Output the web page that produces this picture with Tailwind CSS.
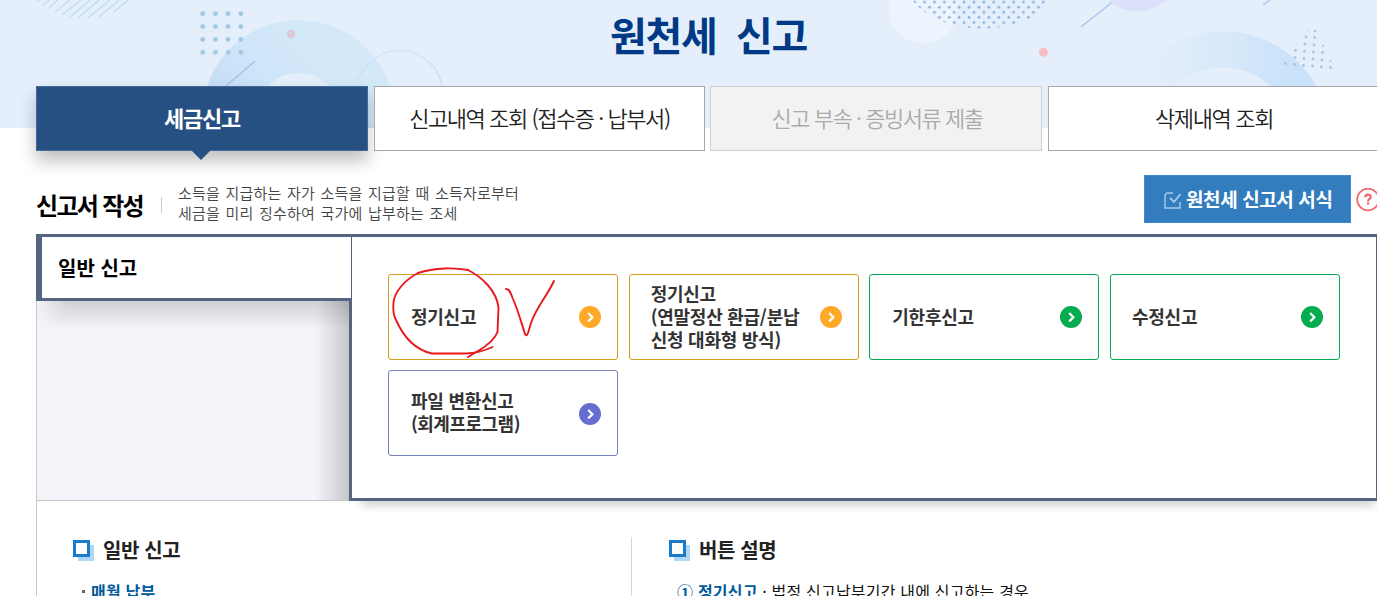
<!DOCTYPE html>
<html lang="ko">
<head>
  <meta charset="UTF-8" />
  <meta name="viewport" content="width=device-width, initial-scale=1.0"/>
  <title>원천세 신고</title>
  <script src="https://cdn.jsdelivr.net/npm/@tailwindcss/browser@4"></script>
</head>
<body class="relative h-[596px] w-[1377px] overflow-hidden bg-white font-['Noto_Sans_CJK_KR',sans-serif] text-[#333] whitespace-nowrap">

  <!-- Banner background -->
  <svg class="absolute left-0 top-0 -z-10" width="1377" height="128" viewBox="0 0 1377 128" fill="none">
    <defs>
      <linearGradient id="ringLeft" x1="0" y1="0.700" x2="0.800" y2="0">
        <stop offset="0.1" stop-color="#c3dbf6"/>
        <stop offset="0.5" stop-color="#cfe5f9"/>
        <stop offset="0.85" stop-color="#d3e9f8"/>
      </linearGradient>
      <linearGradient id="ringRight" x1="0" y1="0" x2="1" y2="0">
        <stop offset="0" stop-color="#e5effc"/>
        <stop offset="0.5" stop-color="#d9e9f9"/>
        <stop offset="0.9" stop-color="#c9e1fa"/>
      </linearGradient>
      <pattern id="dotGrid" x="200" y="8" width="12.7" height="12.9" patternUnits="userSpaceOnUse">
        <circle cx="2.700" cy="5.600" r="2.400" fill="#9fc7e4"/>
      </pattern>
      <pattern id="dotMesh" x="914.6" y="-0.5" width="9.9" height="10.2" patternUnits="userSpaceOnUse">
        <circle cx="5" cy="7.6" r="1.4" fill="#85b0de"/>
        <circle cx="0" cy="2.5" r="1.4" fill="#85b0de"/>
        <circle cx="9.9" cy="2.5" r="1.4" fill="#85b0de"/>
      </pattern>
    </defs>
    <rect width="1377" height="128" fill="#e5effc"/>
    <g stroke="#c0dbf4" stroke-width="1.3">
      <path d="M37 1l2-1M43 5l6-5M49 8l9-8M55 12l15-12M62 15l19-15M70 17l20-17M78 18l21-18M88 18l22-18M99 17l20-17M114 12l14-12"/>
    </g>
    <circle cx="298.500" cy="116.300" r="69.700" stroke="url(#ringLeft)" stroke-width="53"/>
    <rect x="200" y="9" width="44" height="48" fill="url(#dotGrid)"/>
    <circle cx="291" cy="34" r="4.3" fill="#dccbd7"/>
    <path d="M226 86l29-25" stroke="#9bc2ea" stroke-width="1.2"/>
    <circle cx="399.500" cy="94" r="43.500" stroke="#cbdff7" stroke-width="1.2"/>
    <circle cx="923" cy="9" r="34.500" fill="#edf4fe"/>
    <path d="M912 0H1053Q1030 28 982 28.500Q935 28 912 0Z" fill="url(#dotMesh)"/>
    <path d="M1081 27l34-27M1263 5l7-5" stroke="#a6c5ec" stroke-width="1.3"/>
    <ellipse cx="1137" cy="-18" rx="36" ry="29.500" fill="#dce1fb"/>
    <circle cx="1043.500" cy="52.300" r="4.500" fill="#f6bfc5"/>
    <circle cx="1223" cy="138" r="88.500" stroke="url(#ringRight)" stroke-width="36.500"/>
    <g fill="#a9c4e3">
      <circle cx="1307.500" cy="30.500" r=".7"/><circle cx="1315" cy="31" r="1.3"/>
      <circle cx="1306" cy="37" r="1.4"/><circle cx="1314.500" cy="37.500" r="1.4"/>
      <circle cx="1297" cy="44" r=".6"/><circle cx="1305" cy="44" r="1.4"/><circle cx="1314" cy="45" r="1.4"/><circle cx="1323" cy="46" r="1.1"/>
      <circle cx="1295.500" cy="50.500" r="1.4"/><circle cx="1304.500" cy="51.300" r="1.4"/><circle cx="1313.500" cy="52" r="1.4"/><circle cx="1322.500" cy="52.500" r="1.4"/>
      <circle cx="1295" cy="57.500" r="1.4"/><circle cx="1304" cy="58.500" r="1.4"/><circle cx="1313" cy="59" r="1.4"/><circle cx="1322" cy="60" r="1.4"/><circle cx="1330.500" cy="61" r="1"/>
      <circle cx="1285.500" cy="63.500" r="1.4"/><circle cx="1294.500" cy="64.500" r="1.4"/><circle cx="1303.500" cy="65.500" r="1.4"/><circle cx="1312.500" cy="66" r="1.4"/><circle cx="1321.500" cy="67" r="1.4"/><circle cx="1330.500" cy="67.500" r="1.4"/>
    </g>
  </svg>

  <header class="flex h-[86px] justify-center pl-10">
    <h1 class="pt-1 text-[40px] leading-[60px] font-bold tracking-[-1.4px] text-[#003985] [word-spacing:10px]">원천세 신고</h1>
  </header>

  <!-- Tabs -->
  <nav class="flex h-[65px] pl-9 text-[22px] font-[350] tracking-[-1.45px] text-[#222]">
    <a class="relative mr-1.5 flex w-[332px] shrink-0 items-center justify-center border border-[#45699a] bg-[#265081] pb-[3px] font-bold tracking-[-1.2px] text-white shadow-[0_10px_16px_rgba(0,0,0,0.25)]">
      세금신고
      <svg class="absolute left-[154px] top-[63px]" width="20" height="11" viewBox="0 0 20 11"><path d="M0 0h20L10 10z" fill="#265081"/></svg>
    </a>
    <a class="relative mr-[5px] flex w-[331px] shrink-0 items-center justify-center border border-[#a8a8a8] bg-white pb-0.5">신고내역 조회 (접수증 · 납부서)</a>
    <a class="mr-1.5 flex w-[332px] shrink-0 items-center justify-center border border-[#d0d0d0] bg-[#f2f2f2] pb-0.5 pl-0.5 text-[#aaa]">신고 부속 · 증빙서류 제출</a>
    <a class="flex w-[332px] shrink-0 items-center justify-center border border-[#a8a8a8] bg-white pb-0.5 tracking-[-1.35px]">삭제내역 조회</a>
  </nav>

  <!-- Section title -->
  <section class="flex h-[83px] pl-9">
    <h2 class="w-[125px] pt-9 text-[24px] leading-[36px] font-bold tracking-[-1.7px] text-black">신고서 작성</h2>
    <div class="mt-[46px] h-4 w-px bg-[#ccc]"></div>
    <p class="ml-4 pt-8 text-[15px] leading-5 font-[350] tracking-[0.2px] text-[#444] [word-spacing:1.1px]">소득을 지급하는 자가 소득을 지급할 때 소득자로부터<br/>세금을 미리 징수하여 국가에 납부하는 조세</p>
    <div class="ml-auto flex pt-6">
      <button class="flex h-12 w-[207px] items-center border border-[#3b8bd0] bg-[#337dbf] pl-[19px] text-[19px] font-bold tracking-[-0.4px] text-white">
        <svg class="mr-[5px] mt-0.5 shrink-0" width="17" height="17" viewBox="0 0 17 17" fill="none" stroke="#a9cbe8" stroke-width="1.4">
          <path d="M9 1H3L1 3v13h15V10"/>
          <path d="M6 6l4 4 6.500-8" stroke-width="1.8"/>
        </svg>
        원천세 신고서 서식
      </button>
      <div class="ml-[5px] mt-[13px] w-[21px] overflow-hidden">
        <svg width="24" height="24" viewBox="0 0 24 24" fill="none" stroke="#f0696c">
          <circle cx="12" cy="11.500" r="10.800" stroke-width="1.700"/>
          <path d="M9.300 9.200c0-3.600 5.600-3.400 5.400-.2-.1 2-2.600 2-2.600 4.500" stroke-width="2.300"/>
          <path d="M11 15.500h2.200" stroke-width="2.200"/>
        </svg>
      </div>
    </div>
  </section>

  <!-- Report panel -->
  <section class="relative ml-9 flex h-[267px]">
    <div class="flex w-[315px] shrink-0 flex-col">
      <div class="relative z-10 h-[67px] border-y-3 border-l-6 border-[#56647f] bg-white pl-4 text-[20px] leading-[61px] font-bold text-black">일반 신고</div>
      <div class="relative grow overflow-hidden border-b border-l border-[#c8c8c8] bg-[#f2f4fa]">
        <div class="absolute inset-x-0 top-0 h-7 bg-linear-to-b from-black/14 to-transparent [mask-image:linear-gradient(to_right,transparent,black_28px)]"></div>
        <div class="absolute inset-y-0 right-0 w-9 bg-linear-to-r from-transparent via-black/9 to-black/20"></div>
      </div>
    </div>
    <div class="grow border-y-3 border-x border-[#56647f] bg-white pl-9 pt-[37px] shadow-[4px_10px_9px_-6px_rgba(0,0,0,0.2)]">
      <div class="grid w-[952px] grid-cols-[repeat(4,230px)] justify-between gap-y-2.5 text-[18px] leading-[23px] font-bold tracking-[-0.25px]">
        <a class="flex h-[86px] items-center justify-between rounded-[3px] border border-[#d49f1c] pl-[22px] pr-4">
          <span class="pb-0.5">정기신고</span>
          <svg width="22" height="22" viewBox="0 0 22 22" fill="none"><circle cx="11" cy="11" r="11" fill="#ffa928"/><path d="M9.200 7l4.200 4.200-4.200 4.200" stroke="#fff" stroke-width="2.200"/></svg>
        </a>
        <a class="flex h-[86px] items-center justify-between rounded-[3px] border border-[#d49f1c] pl-[21px] pr-4">
          <span class="pb-0.5">정기신고<br/>(연말정산 환급/분납<br/>신청 대화형 방식)</span>
          <svg width="22" height="22" viewBox="0 0 22 22" fill="none"><circle cx="11" cy="11" r="11" fill="#ffa928"/><path d="M9.200 7l4.200 4.200-4.200 4.200" stroke="#fff" stroke-width="2.200"/></svg>
        </a>
        <a class="flex h-[86px] items-center justify-between rounded-[3px] border border-[#07ab4f] pl-[22px] pr-4">
          <span class="pb-0.5">기한후신고</span>
          <svg width="22" height="22" viewBox="0 0 22 22" fill="none"><circle cx="11" cy="11" r="11" fill="#04ac4f"/><path d="M9.200 7l4.200 4.200-4.200 4.200" stroke="#fff" stroke-width="2.200"/></svg>
        </a>
        <a class="flex h-[86px] items-center justify-between rounded-[3px] border border-[#07ab4f] pl-[21px] pr-4">
          <span class="pb-0.5">수정신고</span>
          <svg width="22" height="22" viewBox="0 0 22 22" fill="none"><circle cx="11" cy="11" r="11" fill="#04ac4f"/><path d="M9.200 7l4.200 4.200-4.200 4.200" stroke="#fff" stroke-width="2.200"/></svg>
        </a>
        <a class="flex h-[86px] items-center justify-between rounded-[3px] border border-[#7581b8] pl-[22px] pr-4">
          <span class="pb-0.5">파일 변환신고<br/><span class="tracking-[-0.5px]">(회계프로그램)</span></span>
          <svg class="mt-0.5" width="22" height="22" viewBox="0 0 22 22" fill="none"><circle cx="11" cy="11" r="11" fill="#666dd0"/><path d="M9.200 7l4.200 4.200-4.200 4.200" stroke="#fff" stroke-width="2.200"/></svg>
        </a>
      </div>
    </div>
    <div class="absolute left-[313px] top-[67px] h-[200px] w-[3px] bg-[#56647f]"></div>

    <!-- Pen marks -->
    <svg class="absolute left-[349px] top-[26px]" width="180" height="110" viewBox="385 260 180 110" fill="none" stroke="#e8191c" stroke-width="1.900" stroke-linecap="round" stroke-linejoin="round">
      <path d="M468 270C455 267.500 435 267.500 418 273C405 280 395 291 393.500 302C393 312 393.500 315 396 320C404 338 416 350 432 353.500L466 353.500C478 353 486 350 492.500 347"/>
      <path d="M468 357L478 351C488 345 495 339 497.500 332L498.500 308C497 291 482 277 468 270"/>
      <path d="M506 289C510 289 511 294 513 299C519 313 522 325 525 334Q526.500 337 528 333L531 323C536 308 547 296 554 281"/>
    </svg>
  </section>

  <!-- Descriptions -->
  <section class="ml-9 flex h-[95px] overflow-hidden border-l border-[#c8c8c8] pt-9">
    <div class="w-[594px] shrink-0 pl-9">
      <h3 class="flex h-[26px] items-center text-[20px] font-bold tracking-[-0.4px] text-[#222]">
        <svg class="mr-[9px]" width="21" height="21" viewBox="0 0 21 21" fill="none"><path d="M5 5h16v16H5z" fill="#add7f6"/><path d="M1.500 1.500h14v14h-14z" fill="#fff" stroke="#1c7bc8" stroke-width="3"/></svg>
        일반 신고
      </h3>
      <p class="flex items-center pt-4 pl-[9px] text-[16px] leading-6 font-bold tracking-[0.2px] text-[#005a9c]"><span class="mr-1.5 mt-px size-[3px] bg-[#666]"></span>매월 납부</p>
    </div>
    <div class="border-l border-[#d5d5d5] pl-[37px]">
      <h3 class="flex h-[26px] items-center text-[20px] font-bold tracking-[-0.4px] text-[#222]">
        <svg class="mr-[9px]" width="21" height="21" viewBox="0 0 21 21" fill="none"><path d="M5 5h16v16H5z" fill="#add7f6"/><path d="M1.500 1.500h14v14h-14z" fill="#fff" stroke="#1c7bc8" stroke-width="3"/></svg>
        버튼 설명
      </h3>
      <p class="pt-4 pl-2 text-[16px] leading-6 font-normal tracking-[0.2px] text-[#111]"><span class="font-bold text-[#005a9c]">① 정기신고</span> · 법정 신고납부기간 내에 신고하는 경우</p>
    </div>
  </section>

</body>
</html>
